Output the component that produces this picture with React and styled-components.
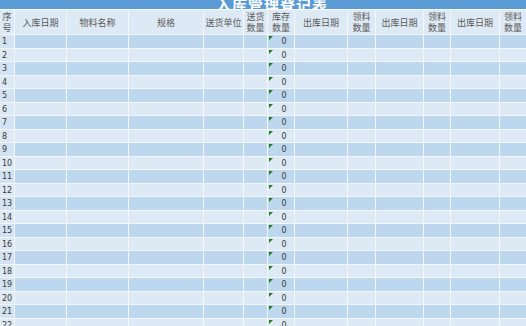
import React from 'react'
import styled, { createGlobalStyle } from 'styled-components'

const GlobalStyle = createGlobalStyle`
  html, body {
    margin: 0;
    padding: 0;
    background: #fff;
    overflow: hidden;
  }
  body {
    font-family: "Noto Sans CJK SC", "DejaVu Sans", sans-serif;
    color: #3a3a3a;
  }
`

const Sheet = styled.div`
  width: 526px;
  height: 326px;
  overflow: hidden;
  display: flex;
  flex-direction: column;
  row-gap: 1px;
  background: #fff;
`

const TitleBar = styled.div`
  height: 9px;
  flex: none;
  background: #5b9bd5;
  overflow: hidden;
  display: flex;
  justify-content: center;
  align-items: flex-end;
  padding-left: 18px;
`

const TitleText = styled.span`
  font-size: 15px;
  line-height: 16px;
  font-weight: 700;
  color: #fff;
  letter-spacing: 1px;
  margin-bottom: -4px;
`

const Grid = styled.div`
  display: grid;
  grid-template-columns: 14px 51px 61px 74px 39px 23px 26px 52px 27px 47px 26px 48px 1fr;
  grid-template-rows: 24px;
  grid-auto-rows: 12.5px;
  gap: 1px;
  background: #f3f7fc;
`

const HeadCell = styled.div`
  background: #dde9f5;
  display: flex;
  align-items: center;
  justify-content: center;
  text-align: center;
  font-size: 9px;
  line-height: 11px;
  color: #5a5a5a;
  white-space: pre-line;
  overflow: hidden;
`

const Cell = styled.div`
  position: relative;
  background: ${p => (p.$first ? (p.$odd ? '#d3e3f3' : '#dde9f5') : p.$odd ? '#bdd7ee' : '#dde9f5')};
  font-family: "DejaVu Sans", sans-serif;
  font-size: 8px;
  line-height: 13px;
  color: #3a3a3a;
  text-align: ${p => (p.$center ? 'center' : 'left')};
  padding-left: ${p => (p.$first ? '2px' : p.$center ? '6px' : '0')};
  overflow: visible;
  white-space: nowrap;
`

const Flag = styled.span`
  position: absolute;
  left: 1px;
  top: 1px;
  width: 0;
  height: 0;
  border-top: 4px solid #1f7a1f;
  border-right: 4px solid transparent;
`

const headers = [
  '序\n号', '入库日期', '物料名称', '规格', '送货单位', '送货\n数量', '库存\n数量',
  '出库日期', '领料\n数量', '出库日期', '领料\n数量', '出库日期', '领料\n数量',
]

const rows = Array.from({ length: 22 }, (_, i) => i + 1)

const App = () => {
  return (
    <>
      <GlobalStyle />
      <Sheet>
        <TitleBar>
          <TitleText>入库管理登记表</TitleText>
        </TitleBar>
        <Grid>
          {headers.map((h, i) => (
            <HeadCell key={'h' + i}>{h}</HeadCell>
          ))}
          {rows.map(n => (
            <React.Fragment key={n}>
              {headers.map((_, c) => (
                <Cell key={c} $odd={n % 2 === 1} $first={c === 0} $center={c === 6}>
                  {c === 0 ? n : null}
                  {c === 6 ? (
                    <>
                      <Flag />0
                    </>
                  ) : null}
                </Cell>
              ))}
            </React.Fragment>
          ))}
        </Grid>
      </Sheet>
    </>
  )
}

export default App
